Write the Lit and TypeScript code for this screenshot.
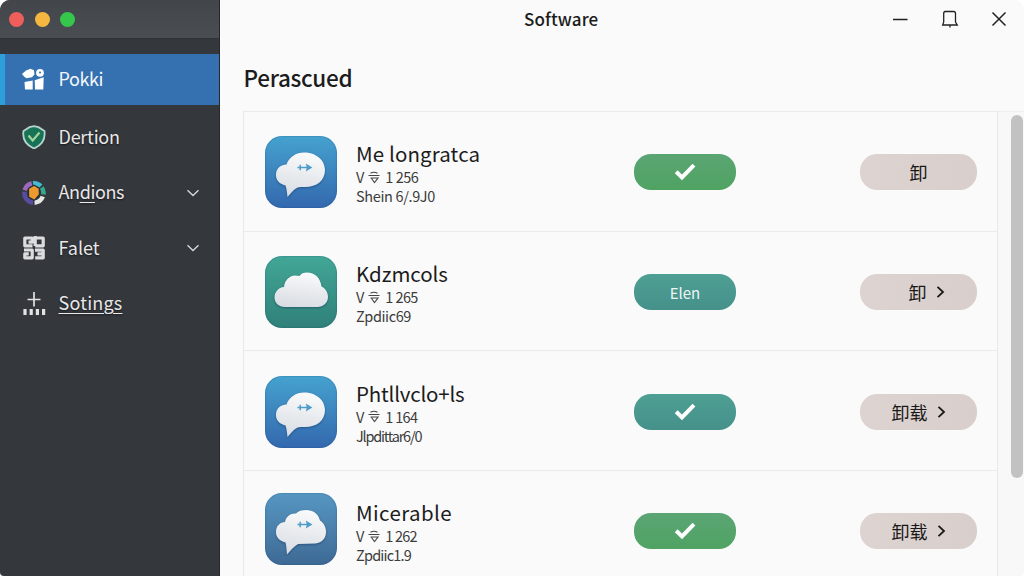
import { LitElement, html, css, svg, nothing } from 'lit';
import { customElement, property } from 'lit/decorators.js';
import { classMap } from 'lit/directives/class-map.js';
import { styleMap } from 'lit/directives/style-map.js';

interface AppEntry {
  name: string;
  nameSpacing: number;
  version: string;
  versionSpacing: number;
  detail: string;
  detailSpacing: number;
  icon: 'chat' | 'cloud' | 'puff';
  tone: 'blue' | 'teal' | 'steel';
  status: string;
  statusTone: 'green' | 'teal';
  action: string;
  more: boolean;
}

const entries: AppEntry[] = [
  {
    name: 'Me longratca', nameSpacing: .12, version: '1 256', versionSpacing: -.5,
    detail: 'Shein 6/.9J0', detailSpacing: -.35,
    icon: 'chat', tone: 'blue', status: '', statusTone: 'green', action: '卸', more: false,
  },
  {
    name: 'Kdzmcols', nameSpacing: -.05, version: '1 265', versionSpacing: -.6,
    detail: 'Zpdiic69', detailSpacing: -.4,
    icon: 'cloud', tone: 'teal', status: 'Elen', statusTone: 'teal', action: '卸', more: true,
  },
  {
    name: 'Phtllvclo+ls', nameSpacing: -.2, version: '1 164', versionSpacing: -.7,
    detail: 'Jlpdittar6/0', detailSpacing: -1.2,
    icon: 'chat', tone: 'blue', status: '', statusTone: 'teal', action: '卸载', more: true,
  },
  {
    name: 'Micerable', nameSpacing: .4, version: '1 262', versionSpacing: -.8,
    detail: 'Zpdiic1.9', detailSpacing: -.8,
    icon: 'puff', tone: 'steel', status: '', statusTone: 'green', action: '卸载', more: true,
  },
];

const arrows = svg`
  <path class="arrow-line" d="M32.5 31.5h11M35.2 28.8v5.4" />
  <path class="arrow-head" d="M40.8 27.4l6.6 4.1-6.6 4.1 1-4.1z" />
`;

const shapes = {
  chat: svg`
    <path class="cloud" d="M21.500 28.500C24 21 31 16.500 39 16.500C51 16.500 60 24 60 34C60 44.500 52 51 40 51C37 51 34.500 51 32.500 51.500C28 54 25.500 57.500 22.500 61C22 57 21.800 53 20.500 49.500C14 48 10.500 43.500 11 38C11.500 32 16 28.500 21.500 28.500Z" />
    ${arrows}
  `,
  cloud: svg`
    <path class="cloud" d="M20 51C13.500 51 9.500 46.500 9.500 41.500C9.500 36 13.500 31.500 19 31C19.500 24.500 24 20 30 19.500Q33 19.500 34.500 20C36 17.500 38.500 16.500 42 16.500C50 16.500 55.500 22 56.500 30.500C60.500 32.500 63 36.500 63 41C63 46.500 58.500 51 52.500 51Z" />
  `,
  puff: svg`
    <path class="cloud" d="M20 29C21 23 26 20 31 20.500C33 18 37 17 41 17C48 17 53.500 21 55 27.500C59 30 61 34.500 61 39C61 45 57 50 50.500 50.500L33 51C28 54 25.500 58 22 61.500C21.500 57 21.500 53 20.500 49.500C14 48 10.500 43.500 11 38C11.500 32.500 15 29.500 20 29Z" />
    ${arrows}
  `,
};

@customElement('app-tile')
export class AppTileElement extends LitElement {
  @property()
  shape: 'chat' | 'cloud' | 'puff' = 'chat';

  @property({ reflect: true })
  tone = 'blue';

  static styles = css`
    :host {
      display: block;
      width: 72px;
      height: 72px;
      border-radius: 17px;
      background: linear-gradient(#45a2cf, #3368ae);
      box-shadow: inset 0 0 1px 1px rgba(20, 60, 110, .15);
    }

    :host([tone='teal']) {
      background: linear-gradient(#42a797, #2f8078);
    }

    :host([tone='steel']) {
      margin-bottom: 4px;
      background: linear-gradient(#5697c2, #3e6995);
    }

    svg {
      display: block;
    }

    .cloud {
      fill: url(#puffy);
      filter: drop-shadow(0 1px 1px rgba(10, 40, 80, .45));
    }

    .arrow-line {
      fill: none;
      stroke: #4f9cc8;
      stroke-width: 1.5;
    }

    .arrow-head {
      fill: #4f9cc8;
    }
  `;

  render() {
    return html`
      <svg width="72" height="72" viewBox="0 0 72 72">
        <defs>
          <linearGradient id="puffy" x1="0.6" y1="0" x2="0.4" y2="1">
            <stop offset="0" stop-color="#f9fafb" />
            <stop offset="1" stop-color="#d9dde2" />
          </linearGradient>
        </defs>
        ${shapes[this.shape]}
      </svg>
    `;
  }
}

@customElement('app-row')
export class AppRowElement extends LitElement {
  @property({ attribute: false })
  entry!: AppEntry;

  static styles = css`
    :host {
      display: grid;
      grid-template-columns: 72px 297px 102px 1fr 117px;
      align-items: center;
      box-sizing: border-box;
      height: 119.7px;
      padding: 2px 20px 0 21px;
      border-top: 1px solid #ebebec;
    }

    .info {
      padding: 1px 0 0 19px;
      white-space: nowrap;
      color: #3c3c3c;
      font-size: 14.5px;
      line-height: 19px;
    }

    .name {
      color: #1c1c1c;
      font-size: 20.5px;
      line-height: 27px;
    }

    .version {
      display: flex;
      align-items: center;
    }

    .mark {
      margin: 1px 5px 0 4px;
      fill: none;
      stroke: #444;
      stroke-width: 1.1;
    }

    .pill {
      display: flex;
      align-items: center;
      justify-content: center;
      height: 36px;
      border-radius: 17px;
    }

    .status {
      color: #eef6f4;
      font-size: 15px;
    }

    .green {
      background: linear-gradient(#5ba574, #4fa362);
    }

    .teal {
      background: linear-gradient(#4e9f94, #45918a);
    }

    .action {
      grid-column: 5;
      gap: 9px;
      background: linear-gradient(100deg, #ddd4d1, #d8cfcc);
      color: #1b1918;
      font-size: 18px;
    }

    .single {
      box-sizing: border-box;
      padding-left: 16px;
    }

    .check {
      fill: none;
      stroke: #fff;
      stroke-width: 4;
    }

    .chevron {
      fill: none;
      stroke: #1b1918;
      stroke-width: 1.8;
    }
  `;

  private spacing(value: number) {
    return styleMap({ letterSpacing: `${value}px` });
  }

  render() {
    const e = this.entry;
    return html`
      <app-tile .shape=${e.icon} tone=${e.tone}></app-tile>
      <div class="info">
        <div class="name"><span style=${this.spacing(e.nameSpacing)}>${e.name}</span></div>
        <div class="version">
          <span>V</span>
          <svg class="mark" width="12" height="13" viewBox="0 0 12 13">
            <path d="M.5 4.500h11M2.500 2.200q3.500-2 7 0M2.500 7h7.500l-3.500 4.500-3-4" />
          </svg>
          <span style=${this.spacing(e.versionSpacing)}>${e.version}</span>
        </div>
        <div class="detail"><span style=${this.spacing(e.detailSpacing)}>${e.detail}</span></div>
      </div>
      <div class="pill status ${e.statusTone}">
        ${e.status || html`
          <svg class="check" width="22" height="18" viewBox="0 0 22 18">
            <path d="M2.200 8.800l5.800 5.700L20 2.200" />
          </svg>
        `}
      </div>
      <div class=${classMap({ pill: true, action: true, single: e.more && e.action.length === 1 })}>
        <span>${e.action}</span>
        ${e.more ? html`
          <svg class="chevron" width="9" height="12" viewBox="0 0 9 12">
            <path d="M1.500 .8L7 6l-5.500 5.200" />
          </svg>
        ` : nothing}
      </div>
    `;
  }
}

const navItems = [
  {
    id: 'pokki',
    label: html`Pokki`,
    icon: svg`
      <path fill="#fff" d="M0 6L4 2.500 8.500.8l3.500 1.500.5 4.200-2.500 2.700-5.500 1L2 8.500z" />
      <circle cx="18" cy="4.800" r="3.900" fill="#fff" />
      <circle cx="18" cy="4.500" r="1" fill="#3272b2" />
      <path fill="#fff" d="M2.500 14l8.200-1.500V21.500H3zM12.700 12.200l9-3-.4 12.300h-8.300z" />
    `,
    expands: false,
  },
  {
    id: 'dertion',
    label: html`Dertion`,
    icon: svg`
      <path fill="#167355" stroke="#b5d2cd" stroke-width="1.800" d="M12 1.200l4.500 1 6 3.800c1 8-2.500 14-10.500 17.500C4 20 .2 14 1.500 6L7.500 2.200z" />
      <path fill="none" stroke="#a3d29a" stroke-width="2.200" d="M6.500 10.500l4.200 5L17.500 7.500" />
    `,
    expands: false,
  },
  {
    id: 'andions',
    label: html`An<u>di</u>ons`,
    icon: svg`
      <g fill="none" stroke-width="4.600">
        <path stroke="#9b68bd" d="M2.700 9.200A9.700 9.700 0 0 1 9.800 2.600" />
        <path stroke="#44b9cf" d="M11 2.400A9.700 9.700 0 0 1 18.800 5.200" />
        <path stroke="#36a68c" d="M19.800 6.500A9.700 9.700 0 0 1 21.400 13.500" />
        <path stroke="#e6e7e4" d="M20.800 15.500A9.700 9.700 0 0 1 12.500 21.600" />
        <path stroke="#574ca0" d="M11 21.600A9.700 9.700 0 0 1 2.400 10.800" />
      </g>
      <path fill="#ec9a2d" stroke="#26303a" stroke-width="1.300" d="M6.500 7.500L12 4.300l5.200 2.900.3 6.300-5 5.800L6.500 16z" />
    `,
    expands: true,
  },
  {
    id: 'falet',
    label: html`Falet`,
    icon: svg`
      <g fill="none" stroke="#dcddde" stroke-width="3.200" stroke-linejoin="round">
        <path d="M10.500 9.800H2.800V2h7.400v4.200H6.500M13.200 0v10M13 2h8.200v7.800h-8" />
        <path d="M2 14h8.200v7.800H2.800v-4h4M13 14.200h8.200v7.600h-8M15.500 17.800h5" />
      </g>
    `,
    expands: true,
  },
  {
    id: 'sotings',
    label: html`<u>Sotings</u>`,
    icon: svg`
      <path fill="none" stroke="#e2e2e3" stroke-width="1.700" d="M12 0v14.500M5.500 7.500h13" />
      <path fill="none" stroke="#e2e2e3" stroke-width="3.200" d="M3 17v6M9.200 17v6M15.400 17v6M21.600 17v6" />
    `,
    expands: false,
  },
];

@customElement('side-nav')
export class SideNavElement extends LitElement {
  @property()
  active = 'pokki';

  static styles = css`
    :host {
      display: block;
      width: 220px;
      background: #34373c;
      box-sizing: border-box;
      border-right: 1px solid #25272b;
    }

    .lights {
      display: flex;
      align-items: center;
      gap: 10.500px;
      height: 38px;
      padding-left: 9px;
      background: linear-gradient(#42464a, #4a4e52);
      border-bottom: 1px solid #303236;
    }

    .light {
      width: 15px;
      height: 15px;
      border-radius: 50%;
    }

    .close {
      background: #ee5f5c;
    }

    .minimize {
      background: #f5b73f;
    }

    .zoom {
      background: #35c74b;
    }

    nav {
      padding-top: 15px;
    }

    .item {
      display: flex;
      align-items: center;
      box-sizing: border-box;
      height: 55.500px;
      padding: 0 19px 0 22px;
      color: #e8e8e9;
      font-size: 18px;
      text-shadow: 0 1px 2px rgba(0, 0, 0, .6);
    }

    .item.active {
      height: 51px;
      margin-bottom: 4.500px;
      padding-left: 17px;
      border-left: 5px solid #2f9fda;
      background: #3571b0;
      color: #f3f7fb;
      text-shadow: none;
    }

    .icon {
      width: 24px;
      height: 24px;
      margin-right: 12.500px;
    }

    .label {
      flex: 1;
      padding-bottom: 3px;
      letter-spacing: -.4px;
    }

    .label.dertion {
      letter-spacing: -.25px;
    }

    .label.falet {
      letter-spacing: 0;
    }

    .label.sotings {
      letter-spacing: .2px;
    }

    u {
      text-decoration-thickness: 1px;
      text-underline-offset: 3px;
    }

    .chevron {
      fill: none;
      stroke: #d5d6d8;
      stroke-width: 1.400;
    }
  `;

  render() {
    return html`
      <div class="lights">
        <span class="light close"></span>
        <span class="light minimize"></span>
        <span class="light zoom"></span>
      </div>
      <nav>
        ${navItems.map(item => html`
        <div class="item ${classMap({ active: item.id === this.active })}">
          <svg class="icon" viewBox="0 0 24 24">${item.icon}</svg>
          <span class="label ${item.id}">${item.label}</span>
          ${item.expands ? html`
            <svg class="chevron" width="14" height="8" viewBox="0 0 14 8">
              <path d="M1.500 1.200L7 6.500l5.500-5.300" />
            </svg>
          ` : nothing}
        </div>
        `)}
      </nav>
    `;
  }
}

@customElement('app-root')
export class AppRootElement extends LitElement {
  static styles = css`
    :host {
      display: flex;
      width: 1024px;
      height: 576px;
      overflow: hidden;
      border-radius: 10px 10px 4px 4px;
      background: #fafafb;
      color: #1c1c1c;
      font-family: 'Noto Sans CJK SC', 'Open Sans', sans-serif;
    }

    main {
      flex: 1;
      min-width: 0;
    }

    header {
      display: flex;
      align-items: center;
      justify-content: space-between;
      height: 38px;
      padding: 0 16px 0 304px;
    }

    .title {
      padding-bottom: 2px;
      font-size: 17px;
      font-weight: 500;
      letter-spacing: .1px;
    }

    .controls {
      fill: none;
      stroke: #222;
      stroke-width: 1.500;
    }

    h1 {
      margin: 0;
      padding-left: 23.500px;
      height: 73px;
      line-height: 78px;
      font-size: 22.500px;
      font-weight: 500;
      letter-spacing: -.3px;
    }

    .body {
      display: flex;
      height: 465px;
      padding-left: 23px;
      overflow: hidden;
    }

    .list {
      width: 755px;
      box-sizing: border-box;
      border: solid #e9e9ea;
      border-width: 0 1px;
    }

    .track {
      flex: 1;
      padding: 3px 1px 0 13px;
      border-top: 1px solid #f0f0f0;
      background: #f8f8f8;
    }

    .thumb {
      height: 363px;
      width: 12px;
      border-radius: 6px;
      background: #c2c2c2;
    }
  `;

  render() {
    return html`
      <side-nav></side-nav>
      <main>
        <header>
          <div class="title">Software</div>
          <svg class="controls" width="116" height="20" viewBox="0 0 116 20">
            <path d="M1 10.500h14.500" />
            <path d="M52.500 2.500h9q2 0 2 2v8.500l1.800 3h-14.600l1-3V4.500q0-2 1.800-2zM58 16v2.500" stroke-width="1.300" />
            <path d="M100.500 3.500l13 13M113.500 3.500l-13 13" />
          </svg>
        </header>
        <h1>Perascued</h1>
        <div class="body">
          <div class="list">
            ${entries.map(entry => html`<app-row .entry=${entry}></app-row>`)}
          </div>
          <div class="track"><div class="thumb"></div></div>
        </div>
      </main>
    `;
  }
}
